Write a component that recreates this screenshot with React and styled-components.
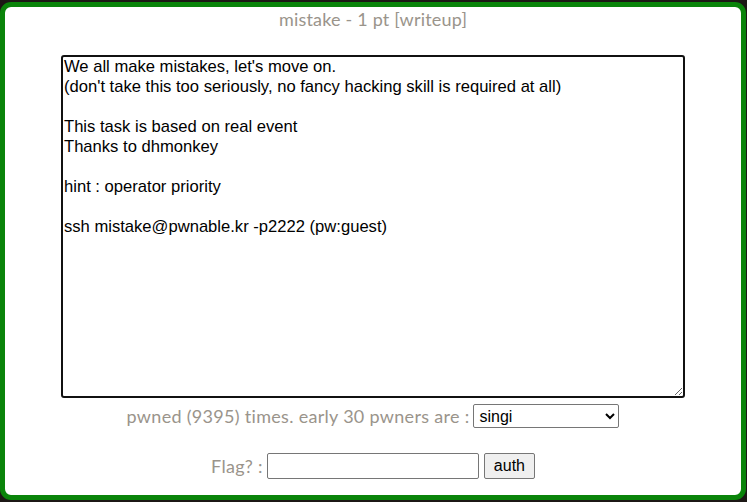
import React from 'react';
import styled, { createGlobalStyle } from 'styled-components';

const description = `We all make mistakes, let's move on.
(don't take this too seriously, no fancy hacking skill is required at all)

This task is based on real event
Thanks to dhmonkey

hint : operator priority

ssh mistake@pwnable.kr -p2222 (pw:guest)`;

const GlobalStyle = createGlobalStyle`
    html, body {
        margin: 0;
        padding: 0;
        background-color: #1c1815;
        overflow: hidden;
    }
`;

const Page = styled.div`
    width: 747px;
    height: 502px;
    padding-top: 2px;
    box-sizing: border-box;
`;

const Panel = styled.div`
    width: 746px;
    height: 498px;
    box-sizing: border-box;
    background-color: #ffffff;
    border: 5px solid #0a840a;
    border-radius: 11px;
    display: flex;
    flex-direction: column;
    align-items: center;
    font-family: 'Lato', 'Open Sans', sans-serif;
    color: #9a948b;
`;

const Title = styled.div`
    height: 25px;
    line-height: 25px;
    font-size: 18px;
    letter-spacing: 0.2px;
`;

const Description = styled.textarea`
    margin-top: 23px;
    width: 624px;
    height: 343px;
    box-sizing: border-box;
    border: 2px solid #111;
    border-radius: 3px;
    padding: 0 1px 2px;
    font-family: 'Liberation Sans', Arial, sans-serif;
    font-size: 16.6px;
    line-height: 20px;
    color: #000;
    background: #fff;
    outline: none;
    overflow: hidden;
`;

const Row = styled.div`
    display: flex;
    align-items: center;
    justify-content: center;
    gap: 4px;
    margin-top: ${(p) => p.top}px;
    height: ${(p) => p.height}px;
`;

const Label = styled.span`
    font-size: 18px;
    letter-spacing: 0.3px;
    white-space: pre;
`;

const Select = styled.select`
    width: 146px;
    height: 24px;
    box-sizing: border-box;
    border: 1px solid #767676;
    border-radius: 2px;
    font-family: 'Liberation Sans', Arial, sans-serif;
    font-size: 16px;
    color: #000;
    background: #fff;
    padding: 0 1px;
`;

const FlagInput = styled.input`
    width: 212px;
    height: 26px;
    box-sizing: border-box;
    border: 1px solid #767676;
    border-radius: 2px;
    font-family: 'Liberation Sans', Arial, sans-serif;
    font-size: 16px;
    padding: 1px 2px;
`;

const AuthButton = styled.button`
    width: 51px;
    height: 26px;
    margin-left: 1px;
    box-sizing: border-box;
    border: 1px solid #767676;
    border-radius: 2px;
    background-color: #efefef;
    font-family: 'Liberation Sans', Arial, sans-serif;
    font-size: 16px;
    color: #000;
    padding: 0;
`;

const App = () => (
    <Page>
        <GlobalStyle />
        <Panel>
            <Title>mistake - 1 pt [writeup]</Title>
            <Description readOnly defaultValue={description} />
            <Row top={6} height={24}>
                <Label>pwned (9395) times. early 30 pwners are :</Label>
                <Select defaultValue="singi">
                    <option value="singi">singi</option>
                </Select>
            </Row>
            <Row top={25} height={26}>
                <Label>Flag? :</Label>
                <FlagInput type="text" />
                <AuthButton>auth</AuthButton>
            </Row>
        </Panel>
    </Page>
);

export default App;
